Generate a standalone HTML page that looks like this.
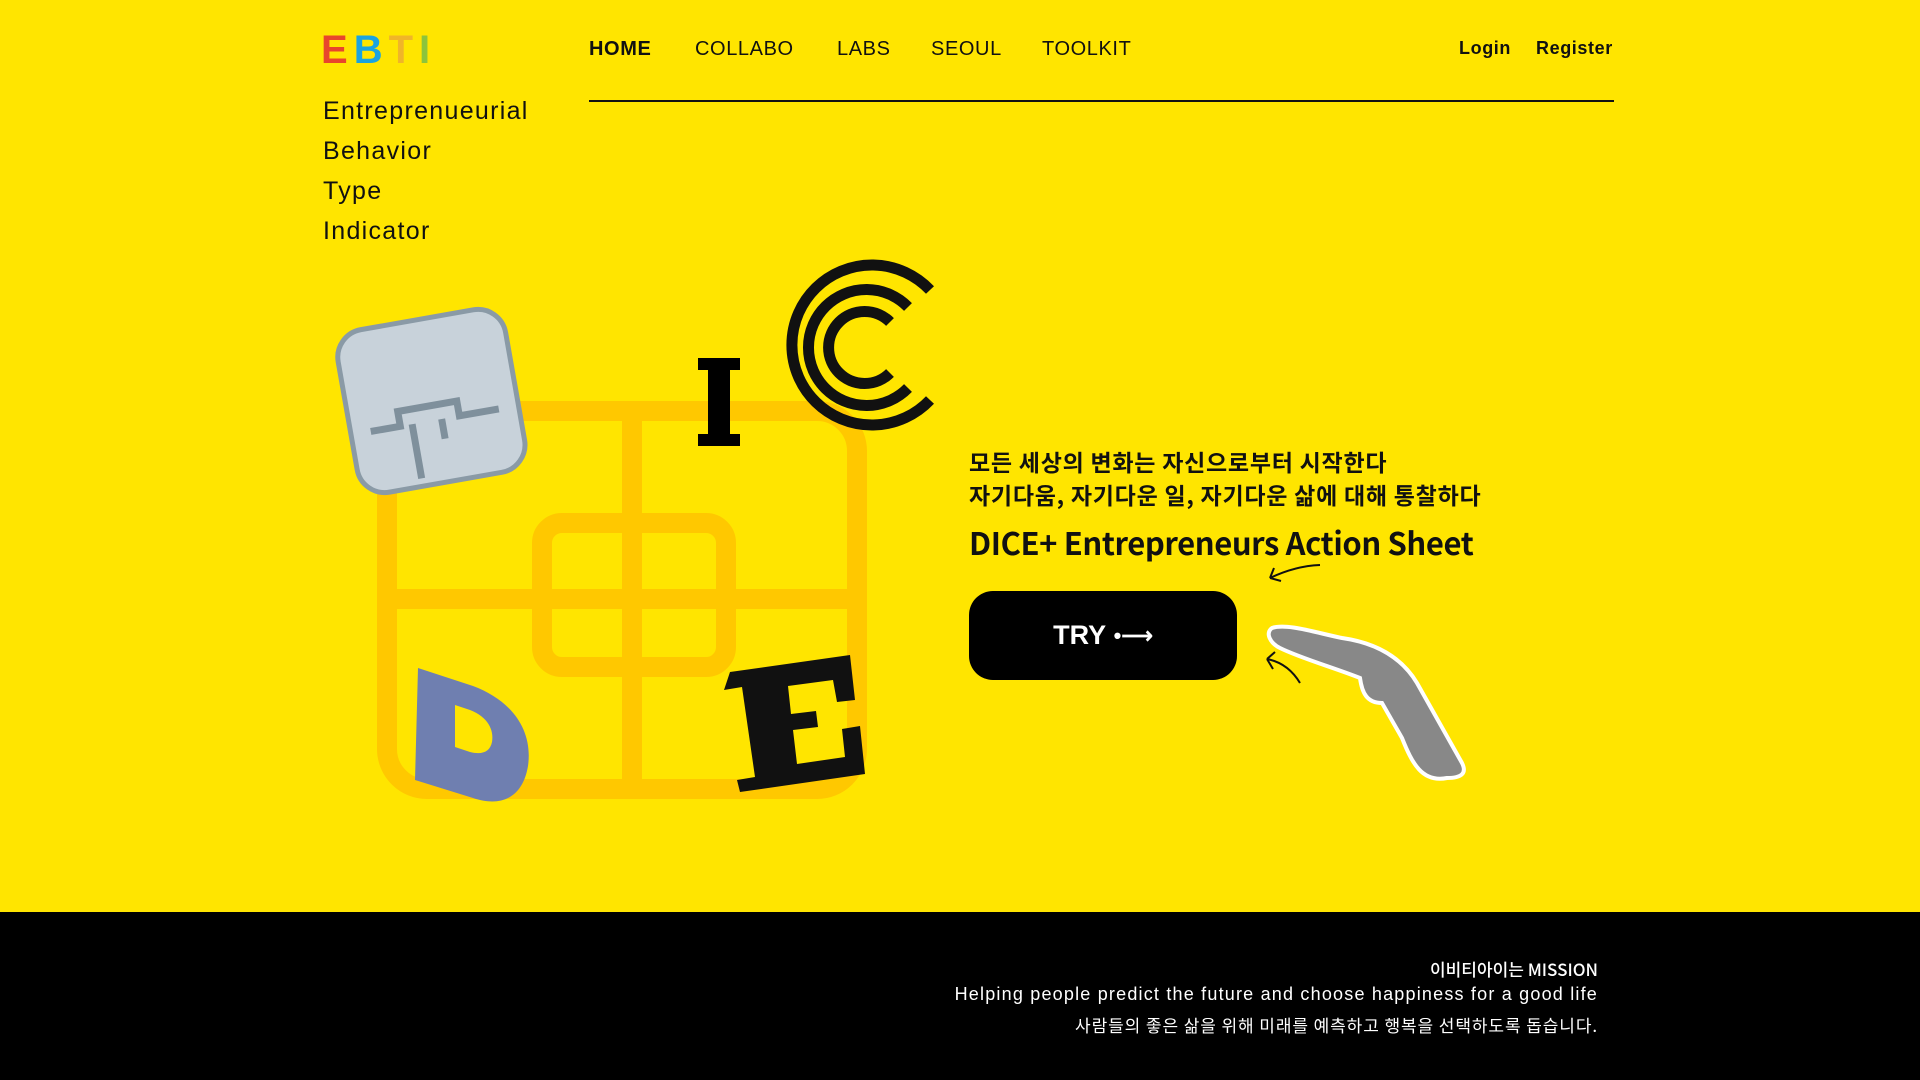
<!DOCTYPE html>
<html><head><meta charset="utf-8"><style>
*{margin:0;padding:0;box-sizing:border-box}
body{width:1920px;height:1080px;background:#ffe500;position:relative;overflow:hidden;font-family:"Liberation Sans","Noto Sans CJK KR",sans-serif;color:#111}
.a{position:absolute;white-space:nowrap}
.nav{top:38px;font-size:20px;letter-spacing:.6px}
.left{left:323px;font-size:25px;line-height:40px;top:91px;letter-spacing:1.3px}
.kr{left:969px;font-family:"Noto Sans CJK KR",sans-serif;font-weight:700;font-size:23px;line-height:33px;top:445px;letter-spacing:0.75px}
.title{left:969px;top:519px;font-weight:700;font-size:31px;font-family:"Noto Sans CJK KR",sans-serif;letter-spacing:-.4px}
.btn{left:969px;top:591px;width:268px;height:89px;background:#000;border-radius:24px;color:#fff;font-weight:700;font-size:27px;display:flex;align-items:center;justify-content:center}
.foot{left:0;top:912px;width:1920px;height:168px;background:#000}
.ft{right:322px;color:#fff;text-align:right;font-size:18px;font-family:"Liberation Sans","Noto Sans CJK KR",sans-serif}
</style></head><body>
<div class="a" style="left:321px;top:28px;font-size:40px;font-weight:700;letter-spacing:6px;font-family:'Liberation Sans',sans-serif"><span style="color:#e8452c">E</span><span style="color:#1aa3e0">B</span><span style="color:#f0b528">T</span><span style="color:#8cc43c">I</span></div>
<div class="a nav" style="left:589px;font-weight:700">HOME</div>
<div class="a nav" style="left:695px">COLLABO</div>
<div class="a nav" style="left:837px">LABS</div>
<div class="a nav" style="left:931px">SEOUL</div>
<div class="a nav" style="left:1042px">TOOLKIT</div>
<div class="a nav" style="left:1459px;font-size:18px;font-weight:700">Login</div>
<div class="a nav" style="left:1536px;font-size:18px;font-weight:700">Register</div>
<div class="a" style="left:589px;top:100px;width:1025px;height:2px;background:#111"></div>
<div class="a left">Entreprenueurial<br>Behavior<br>Type<br>Indicator</div>
<svg class="a" style="left:0;top:0" width="1920" height="1080">
<g fill="none" stroke="#ffc800" stroke-width="20">
<rect x="387" y="411" width="470" height="378" rx="40"/>
<rect x="542" y="523" width="184" height="144" rx="20"/>
<line x1="632" y1="411" x2="632" y2="789"/>
<line x1="387" y1="599" x2="857" y2="599"/>
</g>
<g transform="rotate(-10 435 410)">
<rect x="348" y="318" width="170" height="165" rx="28" fill="#c8d2da" stroke="#8a9aa6" stroke-width="5"/>
<path d="M368 420h30v-15h60v15h40M410 420v55M440 420v20" stroke="#7f909c" stroke-width="7" fill="none"/>
</g>
<path d="M698 358h42v12h-10v64h10v12h-42v-12h10v-64h-10z" fill="#000"/>
<g fill="none" stroke="#111" stroke-width="11">
<path d="M930 290A80 80 0 1 0 930 400"/>
<path d="M908 307A58 58 0 1 0 908 388"/>
<path d="M890 322A36 36 0 1 0 890 373"/>
</g>
<path d="M418 668l55 18c40 15 60 45 55 80-5 30-25 42-55 32l-58-18z" fill="#6f7fb0"/>
<path d="M455 705l15 5c18 7 24 20 22 32-2 10-10 13-22 10l-15-5z" fill="#ffe500"/>
<path d="M730 672l120-17 5 45-18 2-4-22-45 6 3 28 25-3 2 16-25 3 4 34 48-7-3-28 18-3 5 48-125 18-3-12 18-3-13-90-18 3z" fill="#111"/>
<path d="M1270 578q25-12 50-13M1270 578l4-10M1270 578l11 3" stroke="#111" stroke-width="2" fill="none"/>
<path d="M1300 683q-12-20-33-24M1267 659l8-7M1267 659l6 10" stroke="#111" stroke-width="2" fill="none"/>
<path d="M1272 628c15-5 45 5 70 10 35 5 60 20 75 45l45 80c5 10 0 15-15 15-25 5-35-15-45-40l-20-35c-15 0-20-10-22-25-25-10-60-20-80-30-10-5-15-15-8-20z" fill="#888" stroke="#fff" stroke-width="4"/>
</svg>
<div class="a kr">모든 세상의 변화는 자신으로부터 시작한다<br>자기다움, 자기다운 일, 자기다운 삶에 대해 통찰하다</div>
<div class="a title">DICE+ Entrepreneurs Action Sheet</div>
<div class="a btn">TRY&nbsp;<span style="font-size:22px">•⟶</span></div>
<div class="a foot"></div>
<div class="a ft" style="top:956px;font-family:'Noto Sans CJK KR',sans-serif;font-weight:500;font-size:17px">이비티아이는 MISSION</div>
<div class="a ft" style="top:984px;letter-spacing:1.2px">Helping people predict the future and choose happiness for a good life</div>
<div class="a ft" style="top:1012px;font-family:'Noto Sans CJK KR',sans-serif;font-size:17px;letter-spacing:0.9px">사람들의 좋은 삶을 위해 미래를 예측하고 행복을 선택하도록 돕습니다.</div>
</body></html>
